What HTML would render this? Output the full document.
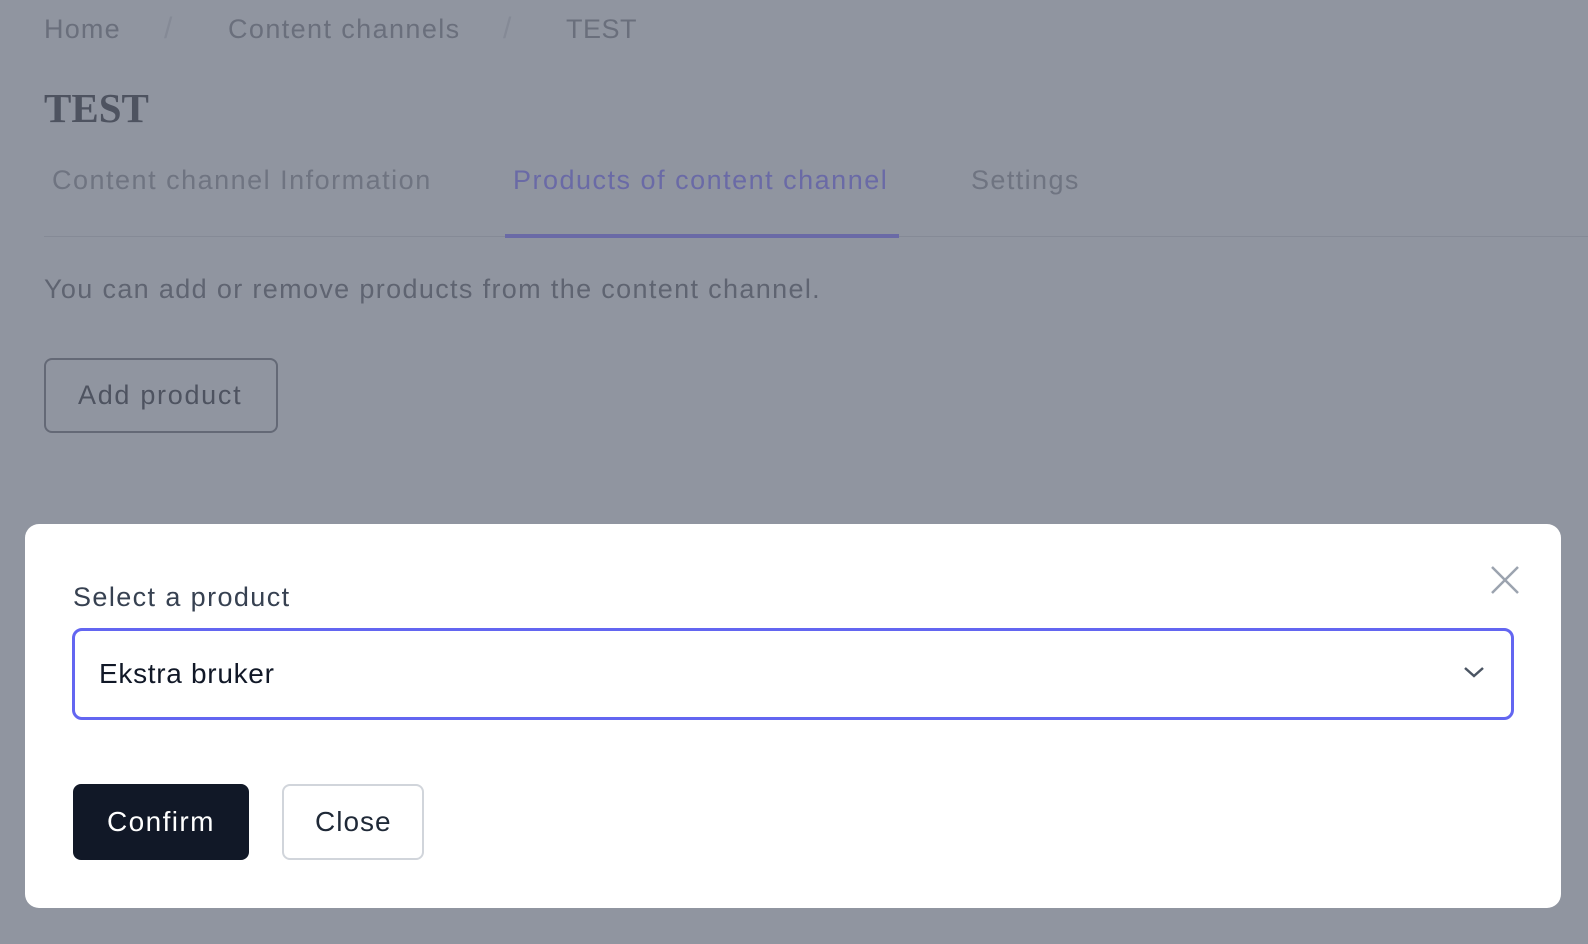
<!DOCTYPE html>
<html><head><meta charset="utf-8"><style>
body{margin:0;width:1588px;height:944px;background:#9095a0;font-family:"Liberation Sans",sans-serif;position:relative;overflow:hidden}
.a{position:absolute;white-space:nowrap}
</style></head><body>
<div class="a" style="left:44px;top:14px;font-size:27px;color:#6a6f7c;letter-spacing:1.2px">Home</div>
<div class="a" style="left:164px;top:12px;font-size:30px;color:#858a96;font-weight:100">/</div>
<div class="a" style="left:228px;top:14px;font-size:27px;color:#6a6f7c;letter-spacing:1.4px">Content channels</div>
<div class="a" style="left:503px;top:12px;font-size:30px;color:#858a96">/</div>
<div class="a" style="left:566px;top:14px;font-size:27px;color:#6a6f7c;letter-spacing:0.5px">TEST</div>
<div class="a" style="left:44px;top:84px;font-size:41px;font-weight:bold;font-family:'Liberation Serif',serif;color:#4e5360">TEST</div>
<div class="a" style="left:52px;top:165px;font-size:27px;color:#6f7481;letter-spacing:1.5px">Content channel Information</div>
<div class="a" style="left:513px;top:165px;font-size:27px;color:#6a6aa6;letter-spacing:1.5px">Products of content channel</div>
<div class="a" style="left:971px;top:165px;font-size:27px;color:#6f7481;letter-spacing:1.4px">Settings</div>
<div class="a" style="left:44px;top:236px;width:1544px;height:1px;background:#858a96"></div>
<div class="a" style="left:505px;top:234px;width:394px;height:4px;background:#6a6aa6"></div>
<div class="a" style="left:44px;top:274px;font-size:27px;color:#5f6471;letter-spacing:1.35px">You can add or remove products from the content channel.</div>
<div class="a" style="left:44px;top:358px;border:2px solid #646976;border-radius:8px;width:230px;height:71px"></div>
<div class="a" style="left:78px;top:380px;font-size:27px;color:#4e5360;letter-spacing:1.7px">Add product</div>
<div class="a" style="left:25px;top:524px;width:1536px;height:384px;background:#fff;border-radius:14px"></div>
<div class="a" style="left:73px;top:582px;font-size:27px;color:#374151;letter-spacing:1.4px">Select a product</div>
<svg class="a" style="left:1489px;top:564px" width="32" height="32" viewBox="0 0 32 32"><path d="M3 3L29 29M29 3L3 29" stroke="#9ca3af" stroke-width="2.5"/></svg>
<div class="a" style="left:72px;top:628px;width:1442px;height:92px;border:3px solid #6366f1;border-radius:10px;box-sizing:border-box"></div>
<div class="a" style="left:99px;top:658px;font-size:28px;color:#111827;letter-spacing:0.7px">Ekstra bruker</div>
<svg class="a" style="left:1462px;top:664px" width="24" height="16" viewBox="0 0 24 16"><path d="M3 4L12 12L21 4" stroke="#4b5563" stroke-width="2.5" fill="none"/></svg>
<div class="a" style="left:73px;top:784px;width:176px;height:76px;background:#111827;border-radius:8px"></div>
<div class="a" style="left:107px;top:806px;font-size:28px;color:#fff;letter-spacing:1.4px">Confirm</div>
<div class="a" style="left:282px;top:784px;width:142px;height:76px;border:2px solid #d1d5db;border-radius:8px;box-sizing:border-box"></div>
<div class="a" style="left:315px;top:806px;font-size:28px;color:#1f2937;letter-spacing:1px">Close</div>
</body></html>
